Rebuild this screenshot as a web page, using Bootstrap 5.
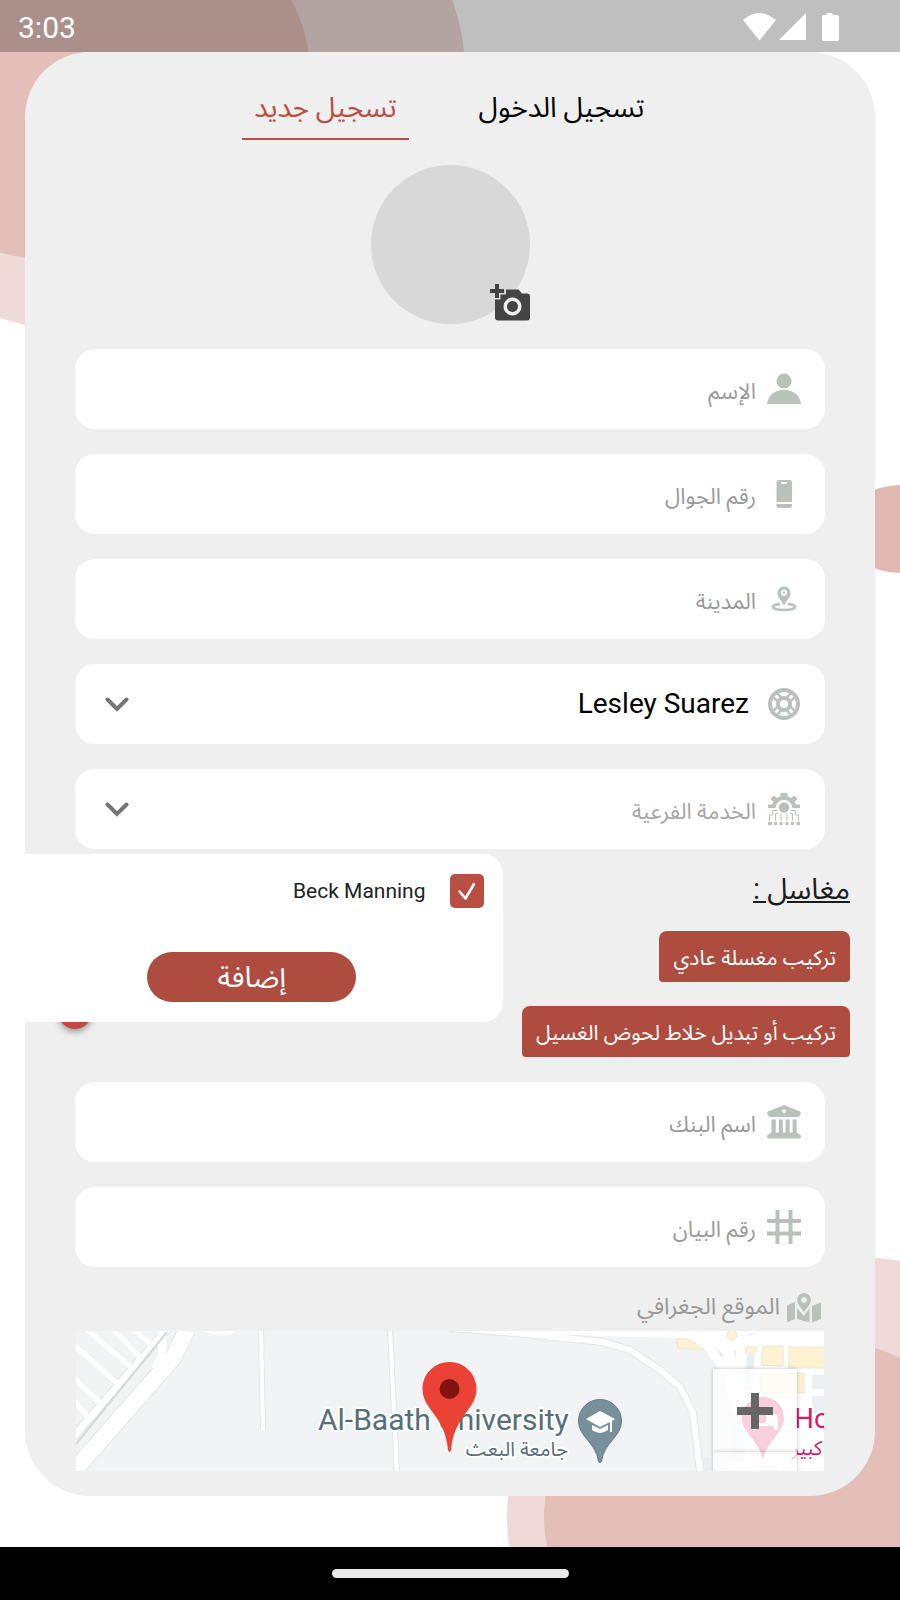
<!DOCTYPE html>
<html lang="ar" dir="rtl">
<head>
<meta charset="utf-8">
<meta name="viewport" content="width=device-width, initial-scale=1">
<title>تسجيل جديد</title>
<link href="https://cdn.jsdelivr.net/npm/bootstrap@5.3.0/dist/css/bootstrap.min.css" rel="stylesheet">
<style>
  :root { --brand: #ad4c3f; --brand-bright: #b94f42; --icon: #b9c1ba; --hint: #999; }
  body { font-family: Roboto, "Noto Sans Arabic", "DejaVu Sans Condensed", "DejaVu Sans", sans-serif; background: #fff; color: #000; }
  .backdrop-art { position: absolute; inset: 0; width: 100%; height: 100%; }
  .status-bar { height: 52px; padding: 2px 18px 0; background: rgba(0,0,0,.25); color: #fff; font-size: 30px; }
  .status-icons { margin-right: 42px; }
  .page-main { padding: 0 25px 51px; }
  .sheet { background: #efefef; border-radius: 65px; }
  .tabs-row { gap: 69px; padding: 33px 13px 0 0; }
  .tab-btn { min-width: 167px; height: 55px; padding: 6px 0 13px; border: 0; border-bottom: 2px solid transparent; background: none; font-size: 28px; line-height: 34px; white-space: nowrap; }
  .tab-btn.active { color: var(--brand-bright); border-color: var(--brand-bright); }
  .avatar { width: 159px; height: 159px; background: #d8d8d8; margin: 25px auto; }
  .avatar-add { right: 0; bottom: 2px; width: 42px; height: 40px; padding: 0; border: 0; background: none; }
  .field-list { padding: 0 50px; gap: 25px; }
  .field-box { height: 80px; border-radius: 20px; background: #fff; padding: 0 24px; gap: 11px; }
  .field-box svg { color: var(--icon); flex: none; }
  .field-box input, .field-box select { border: 0; background: transparent; padding: 4px 0 0; font-size: 22px; height: 100%; box-shadow: none; min-width: 0; }
  .field-box input::placeholder { color: var(--hint); opacity: 1; }
  .field-box select { appearance: none; color: #a6a6a6; outline: 0; }
  .field-box select.chosen { color: #000; font-size: 28px; padding: 0 7px 0 0; }
  .field-box .arrow { color: #757575; margin-left: 6px; pointer-events: none; }
  .services { padding: 21px 25px 25px; }
  .services h2 { font-size: 29px; line-height: 38px; font-weight: 400; color: #1c1c1c; text-decoration: underline; margin: 0 0 23px; }
  .chip { height: 51px; background: var(--brand); color: #fff; border: 0; border-radius: 8px 8px 4px 4px; padding: 5px 14px 0; font-size: 21px; }
  .picker { left: -24px; top: 5px; width: 59%; height: 168px; background: #fff; border-radius: 20px; padding: 20px 19px; z-index: 2; }
  .picker .form-check-input { width: 34px; height: 34px; margin: 0; float: none; border: 0; border-radius: 5px; background-color: var(--brand-bright); }
  .picker .form-check-input:checked { background-size: 100%; background-image: url("data:image/svg+xml,%3Csvg xmlns='http://www.w3.org/2000/svg' viewBox='0 0 34 34'%3E%3Cpath fill='none' stroke='%23fff' stroke-width='2.500' stroke-linecap='round' stroke-linejoin='round' d='M9.500 17.500l6 7 8.500-14.500'/%3E%3C/svg%3E"); }
  .picker label { font-size: 21px; line-height: 32px; color: #212121; }
  .add-btn { width: 209px; height: 50px; border-radius: 25px; border: 0; background: var(--brand); color: #fff; font-size: 29px; line-height: 36px; padding: 0; }
  .fab { left: 33px; top: 146px; width: 34px; height: 34px; border: 0; background: #c24a3c; box-shadow: 0 3px 6px rgba(0,0,0,.35); z-index: 1; }
  .map-title { padding: 17px 4px 0; height: 64px; gap: 7px; font-size: 23px; color: var(--hint); }
  .map-title svg { color: var(--icon); }
  .map-area { margin: 0 51px 25px; height: 140px; background: #f1f3f5; }
  .zoom-stack { right: 27px; top: 38px; width: 84px; }
  .zoom-stack button { height: 83px; border: 0; padding: 0; background: rgba(255,255,255,.75); box-shadow: 0 0 4px rgba(0,0,0,.25); color: #666; }
  .nav-strip { height: 53px; background: #000; }
  .nav-strip span { width: 237px; height: 9px; background: #e9e9e9; }
</style>
</head>
<body>
<div class="position-relative d-flex flex-column min-vh-100 overflow-hidden">
  <svg class="backdrop-art" viewBox="0 0 900 1600" preserveAspectRatio="none" aria-hidden="true">
    <ellipse cx="126" cy="72" rx="339" ry="265" fill="#efdad8"/>
    <ellipse cx="70" cy="73" rx="240" ry="188" fill="#e4bfba"/>
    <ellipse cx="902" cy="529" rx="60" ry="44" fill="#e1b7b2"/>
    <ellipse cx="845" cy="1516" rx="338" ry="259" fill="#efdad8"/>
    <ellipse cx="780" cy="1518" rx="236" ry="186" fill="#e4bfba"/>
  </svg>

  <header class="status-bar position-relative d-flex align-items-center justify-content-between" dir="ltr">
    <span>3:03</span>
    <svg class="status-icons" width="98" height="30" viewBox="0 0 98 30" fill="#fff" aria-hidden="true">
      <path d="M1 8Q17-6 34 8L17.500 28.500z"/><path d="M64 1v27H37z"/><path d="M84.500 1h6v2H95q2 0 2 2v22q0 2-2 2H82q-2 0-2-2V5q0-2 2-2h2.500z"/>
    </svg>
  </header>

  <main class="page-main position-relative flex-grow-1">
    <form class="sheet overflow-hidden">
      <div class="tabs-row d-flex justify-content-center">
        <button type="button" class="tab-btn">تسجيل الدخول</button>
        <button type="button" class="tab-btn active">تسجيل جديد</button>
      </div>

      <div class="avatar rounded-circle position-relative">
        <button type="button" class="avatar-add position-absolute" aria-label="إضافة صورة">
          <svg class="d-block" width="42" height="40" viewBox="0 0 42 40" aria-hidden="true">
            <path fill="#444" fill-rule="evenodd" d="M18 7.500h12.500l3.500 4h5q3 0 3 3v21q0 3-3 3H10q-3 0-3-3V17.500h5.500v-5H18zM24.500 15.500a9 9 0 1 0 .01 0zM24.500 19a5.500 5.500 0 1 1-.01 0z"/>
            <path fill="#444" d="M7 2h4v5h5v4h-5v5H7v-5H2V7h5z"/>
          </svg>
        </button>
      </div>

      <div class="field-list d-flex flex-column">
        <div class="field-box d-flex align-items-center">
          <svg width="34" height="34" viewBox="0 0 34 34" fill="currentColor" aria-hidden="true"><circle cx="17" cy="9" r="7.500"/><path d="M0 32C2 13 32 13 34 32z"/></svg>
          <input class="form-control" type="text" placeholder="الإسم" aria-label="الإسم">
        </div>
        <div class="field-box d-flex align-items-center">
          <svg width="34" height="34" viewBox="0 0 34 34" aria-hidden="true"><path fill="currentColor" fill-rule="evenodd" d="M12 3h11q2 0 2 2v20H9.500V5q0-2 2.500-2zM14 5v1.800h6V5zM9.500 27H25v1.500q0 2.500-2.500 2.500H12q-2.500 0-2.500-2.500z"/></svg>
          <input class="form-control" type="tel" dir="rtl" placeholder="رقم الجوال" aria-label="رقم الجوال">
        </div>
        <div class="field-box d-flex align-items-center">
          <svg width="34" height="34" viewBox="0 0 34 34" aria-hidden="true"><path fill="currentColor" fill-rule="evenodd" d="M17 4.500c-4 0-6.500 3-6.500 6.500 0 4.500 4 7.500 6.500 12.500 2.500-5 6.500-8 6.500-12.500 0-3.500-2.500-6.500-6.500-6.500zM17 7.500a3.200 3.200 0 1 1-.01 0z"/><circle cx="17" cy="10.500" r="1.200" fill="currentColor"/><path d="M13 22c-11 1-9 6 4 6s15-5 4-6" fill="none" stroke="currentColor" stroke-width="2.500"/></svg>
          <input class="form-control" type="text" placeholder="المدينة" aria-label="المدينة">
        </div>
        <div class="field-box d-flex align-items-center">
          <svg width="34" height="34" viewBox="0 0 34 34" fill="none" stroke="currentColor" aria-hidden="true"><path stroke-width="8" d="M12.500 12.500L7 7M21.500 12.500L27 7M12.500 21.500L7 27M21.500 21.500l5.500 5.500"/><path stroke="#fff" stroke-width="3" d="M12 12L8 8M22 12l4-4M12 22l-4 4M22 22l4 4"/><circle cx="17" cy="17" r="14" stroke-width="4"/><circle cx="17" cy="17" r="6" stroke-width="4"/></svg>
          <select class="chosen flex-grow-1" aria-label="الخدمة"><option>Lesley Suarez</option></select>
          <svg class="arrow" width="24" height="15" viewBox="0 0 24 15" fill="none" stroke="currentColor" stroke-width="4" stroke-linecap="round" aria-hidden="true"><path d="M2.500 2.500L12 12l9.500-9.500"/></svg>
        </div>
        <div class="field-box d-flex align-items-center">
          <svg width="34" height="34" viewBox="0 0 34 34" aria-hidden="true"><g fill="currentColor"><path d="M1 16v-3.500h4l1.200-3-2.700-2.700L7 3.500 9.500 6l4-1.800V1h7v3.200l4 1.800L27 3.500l3.500 3.300-2.700 2.700 1.200 3h4V16h-7.500C24 5 10 5 8.500 16z"/><circle cx="17" cy="15.500" r="5.200"/><path d="M1 30h4v3H1zM7 30h3v3H7zM12.500 30h3v3h-3zM18.500 30h3v3h-3zM24 30h3v3h-3zM29.500 30H33v3h-3.500z"/></g><path fill="none" stroke="currentColor" stroke-width="1" d="M2.500 29v-6h3v-4.500H10M8.500 29v-7.500H11M14 29v-7.500M20 29v-7.500M25.500 29v-7.500H23M31.500 29v-6h-3v-4.500H24"/></svg>
          <select class="flex-grow-1" aria-label="الخدمة الفرعية"><option>الخدمة الفرعية</option></select>
          <svg class="arrow" width="24" height="15" viewBox="0 0 24 15" fill="none" stroke="currentColor" stroke-width="4" stroke-linecap="round" aria-hidden="true"><path d="M2.500 2.500L12 12l9.500-9.500"/></svg>
        </div>
      </div>

      <section class="services position-relative">
        <h2>مغاسل :</h2>
        <div class="d-flex flex-column align-items-start gap-4">
          <button type="button" class="chip">تركيب مغسلة عادي</button>
          <button type="button" class="chip">تركيب أو تبديل خلاط لحوض الغسيل</button>
        </div>
        <button type="button" class="fab rounded-circle position-absolute" aria-label="إضافة خدمة"></button>
        <div class="picker position-absolute d-flex flex-column justify-content-between">
          <div class="d-flex align-items-center gap-4">
            <input class="form-check-input" type="checkbox" id="opt1" checked>
            <label for="opt1">Beck Manning</label>
          </div>
          <button type="button" class="add-btn align-self-center">إضافة</button>
        </div>
      </section>

      <div class="field-list d-flex flex-column">
        <div class="field-box d-flex align-items-center">
          <svg width="34" height="34" viewBox="0 0 34 34" aria-hidden="true"><path fill="currentColor" fill-rule="evenodd" d="M17 0L33 6.500q1.500 1 .5 3L31.500 12h-29L.5 9.500Q-.5 7.500 1 6.500zM17 4.200a2 2 0 1 0 .01 0z"/><path fill="currentColor" d="M4.500 14.500h4.300v13h3v-13h4v13h2.800v-13h4v13h3v-13h4v13q4.400 2 4.400 4.500 0 1.500-2 1.500H2q-2 0-2-1.500 0-2.500 4.500-4.500z"/></svg>
          <input class="form-control" type="text" placeholder="اسم البنك" aria-label="اسم البنك">
        </div>
        <div class="field-box d-flex align-items-center">
          <svg width="34" height="34" viewBox="0 0 34 34" fill="none" stroke="currentColor" stroke-width="4" aria-hidden="true"><path d="M10.500 0v34M23.500 0v34M0 11h34M0 23.500h34"/></svg>
          <input class="form-control" type="text" placeholder="رقم البيان" aria-label="رقم البيان">
        </div>
      </div>

      <div class="field-list">
        <div class="map-title d-flex align-items-center">
          <svg width="34" height="30" viewBox="0 0 34 30" aria-hidden="true"><path fill="currentColor" fill-rule="evenodd" d="M17 0c-4 0-6.800 3-6.800 6.800 0 4.500 4 8 6.800 12.200 2.800-4.200 6.800-7.700 6.800-12.200C23.800 3 21 0 17 0zm0 4a3 3 0 1 1-.01 0z"/><path fill="currentColor" d="M0 12.500l8-3.500V26l-8 3.500zM10 15l7 8 5.500-8v14l-5.500-1-7-2zM25 13l9-3.500v16.500L25 29.500z"/></svg>
          <span>الموقع الجغرافي</span>
        </div>
      </div>
      <div class="map-area position-relative overflow-hidden">
        <svg class="d-block w-100 h-100" viewBox="0 0 748 140" preserveAspectRatio="xMidYMid slice" direction="ltr" role="img" aria-label="خريطة">
          <g fill="none" stroke="#e3e6e8">
            <path stroke-width="18" d="M-4 142L97 27l14-28"/><path stroke-width="9" d="M-2 105L80 11l12-14"/><path stroke-width="6" d="M185-2l2 101M314-2l7 144"/><path stroke-width="8" d="M374-3l66 5 87 9 27 8 30 20 20 17 13 26 7 58"/>
          </g>
          <g fill="none" stroke="#fff">
            <path stroke-width="16" d="M-4 142L97 27l14-28"/><path stroke-width="8" d="M86-1v26l-7 13"/><path stroke-width="7" d="M-2 105L80 11l12-14"/>
            <path stroke-width="5" d="M10-2l46 39M37-2l27 29M57-2l19 16M-1 15l42 37M-1 48l25 24M-1 71l13 15"/>
            <path stroke-width="4" d="M185-2l2 101M314-2l7 144"/><path stroke-width="6" d="M374-3l66 5 87 9 27 8 30 20 20 17 13 26 7 58"/>
            <path stroke="#d5d8db" stroke-width="2" d="M0 113L91 1"/>
          </g>
          <path fill="#fff" d="M127 0q22 9 34 0zM380 0l180 6 47 1 23 13 18 25 8 30v67h92V0z"/>
          <path fill="#f1f3f5" d="M637 44l12 5-1 91h-11z"/>
          <g fill="#fdf3d3" stroke="#eee6d5" stroke-width="1"><path d="M601 8l12 0 15 11-26-2z"/><circle cx="656" cy="4" r="5"/><path d="M687 15h20v20l-22-1zM713 16h36v21h-36zM684 42h44v20h-44zM670 16h11l-2 6h-10z"/></g>
          <path fill="#eceff2" d="M671 23h8l-3 36h-8zM736 44h13v14h-13zM736 65h13v17h-13zM638 14l9 9v6zM626 126h8v15h-8zM657 19l3 1v9zM673 2l9 1-9 2zM653 80h16v50h-14zM680 134h22v8h-22z"/>
          <path fill="#ec407a" d="M687 66c-12 0-21 9-21 21 0 15 17 22 21 42 4-20 21-27 21-42 0-12-9-21-21-21z"/>
          <path fill="#fff" d="M676 78h4v14h10v-9h8q4 0 4 5v11h-4v-4h-18v4h-4z"/>
          <g fill="#546e7a" stroke="#fff" stroke-width="4" paint-order="stroke" stroke-linejoin="round">
            <text x="242" y="99" font-size="30">Al-Baath University</text>
            <text x="441" y="125" font-size="20" text-anchor="middle">جامعة البعث</text>
            <g fill="#d81b60"><text x="718" y="97" font-size="28">Ho</text><text x="731" y="124" font-size="20" text-anchor="middle">كبير</text></g>
          </g>
          <path fill="#78909c" stroke="#607d8b" d="M524 68.500c-12 0-21.500 9.500-21.500 21.500 0 16 18 22 20 40.500q1.500 3 3 0C527.500 112 545.500 106 545.500 90c0-12-9.500-21.500-21.500-21.500z"/>
          <path fill="#fff" d="M524 80l15 8-3 2v11h-2V91l-10 5-14-8zM516 94l8 4 8-4v5q-8 6-16 0z"/>
          <path fill="#ea4335" d="M373.500 31c-15 0-27 12-27 27 0 10 5 16 10 23 9 12 14 22 15.500 38q1.500 4 3 0c1.500-16 6.500-26 15.500-38 5-7 10-13 10-23 0-15-12-27-27-27z"/><circle cx="373.500" cy="58" r="10" fill="#811411"/>
        </svg>
        <div class="zoom-stack position-absolute d-flex flex-column">
          <button type="button" aria-label="تكبير"><svg width="36" height="36" viewBox="0 0 36 36" fill="none" stroke="currentColor" stroke-width="8" aria-hidden="true"><path d="M18 0v36M0 18h36"/></svg></button>
          <button type="button" aria-label="تصغير"></button>
        </div>
      </div>
    </form>
  </main>

  <footer class="nav-strip position-relative d-flex align-items-center justify-content-center"><span class="rounded-pill"></span></footer>
</div>
<script src="https://cdn.jsdelivr.net/npm/bootstrap@5.3.0/dist/js/bootstrap.bundle.min.js"></script>
</body>
</html>
